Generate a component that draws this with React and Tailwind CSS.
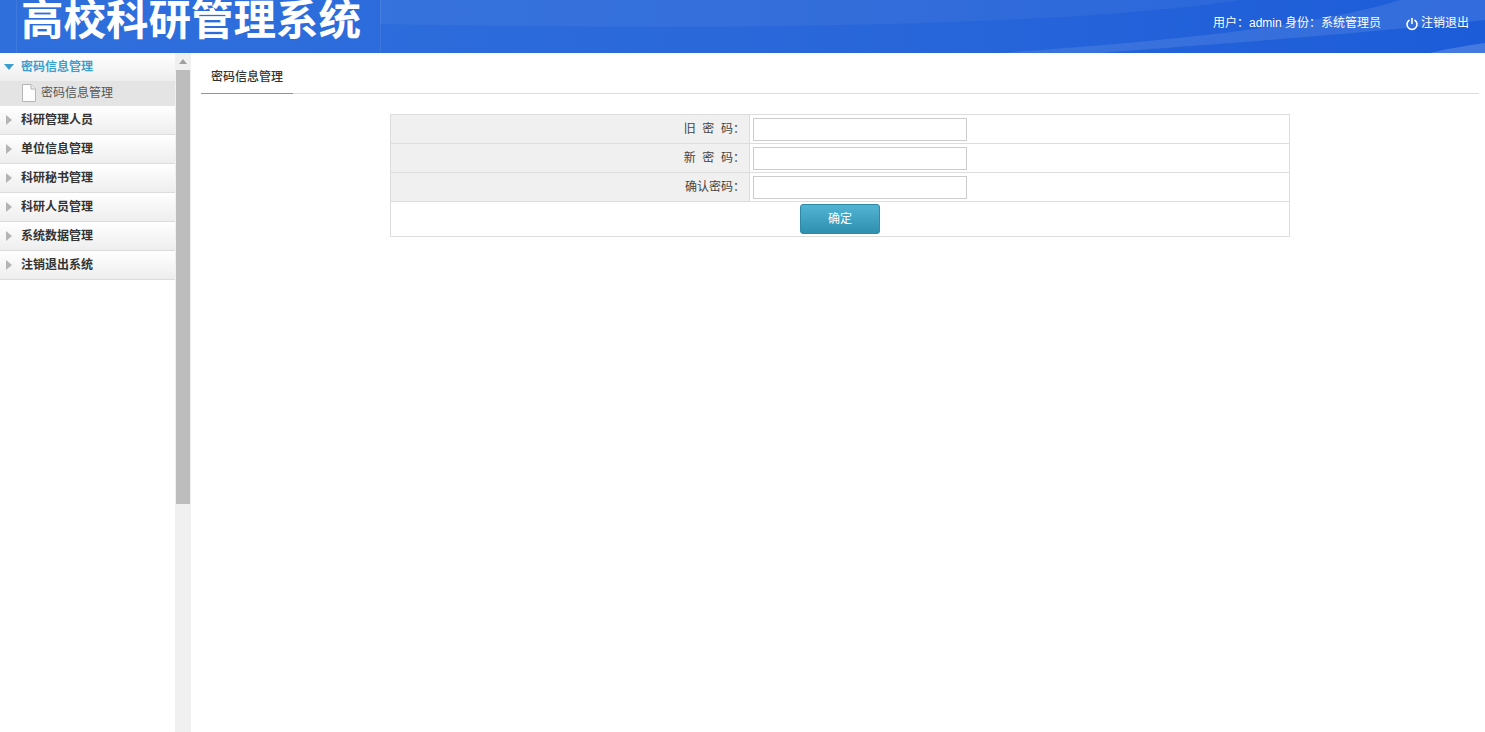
const FONT = '"Liberation Sans", "Noto Sans CJK SC", sans-serif';

function Arrow({ open }) {
  return open ? (
    <svg width="10" height="6" viewBox="0 0 10 6" className="ml-[4px] mr-[7px]">
      <path d="M0 0H10L5 6Z" fill="#3a9ecf" />
    </svg>
  ) : (
    <svg width="6" height="10" viewBox="0 0 6 10" className="ml-[6px] mr-[9px]">
      <path d="M0 0L6 5L0 10Z" fill="#b4b4b4" />
    </svg>
  );
}

function MenuHeader({ label, open }) {
  return (
    <div
      className={
        open
          ? "flex items-center h-[28px] bg-gradient-to-b from-[#ffffff] to-[#eeeeee] text-[12px] font-bold text-[#3a9ecf]"
          : "flex items-center h-[29px] border-b border-[#dcdcdc] bg-gradient-to-b from-[#ffffff] to-[#eeeeee] text-[12px] font-bold text-[#333333]"
      }
    >
      <Arrow open={open} />
      <span>{label}</span>
    </div>
  );
}

function PageIcon() {
  return (
    <svg width="14" height="18" viewBox="0 0 14 18" className="ml-[22px] mr-[5px]">
      <path d="M0.5 0.5H9L13.5 5V17.5H0.5Z" fill="#fdfdfd" stroke="#b5b5b5" />
      <path d="M9 0.5V5H13.5" fill="#eeeeee" stroke="#b5b5b5" />
    </svg>
  );
}

function FormRow({ label }) {
  return (
    <tr className="h-[29px]">
      <td className="border border-[#dddddd] bg-[#f0f0f0] text-right pr-[4px] text-[12px] text-[#444444] whitespace-pre">
        {label}
      </td>
      <td className="border border-[#dddddd] pl-[3px]">
        <input className="block w-[214px] h-[23px] border border-[#cccccc] bg-white" />
      </td>
    </tr>
  );
}

export default function App() {
  const menus = ["科研管理人员", "单位信息管理", "科研秘书管理", "科研人员管理", "系统数据管理", "注销退出系统"];
  return (
    <div className="h-[732px] w-[1485px] overflow-hidden bg-white flex flex-col" style={{ fontFamily: FONT }}>
      <header className="relative h-[53px] shrink-0 overflow-hidden bg-gradient-to-r from-[#2f6fdc] via-[#2a68da] to-[#1c5cd8] flex items-start justify-between">
        <svg className="absolute inset-0" width="1485" height="53" viewBox="0 0 1485 53">
          <path d="M1000 53C1150 42 1310 28 1400 0H1485V20C1350 35 1200 45 1100 53Z" fill="#ffffff" fillOpacity="0.1" />
          <path d="M380 0H1240C1100 22 800 32 380 24Z" fill="#ffffff" fillOpacity="0.05" />
          <path d="M1430 53C1450 48 1470 45 1485 43V53Z" fill="#ffffff" fillOpacity="0.18" />
          <path d="M16.5 0V53M380.5 0V53" stroke="#ffffff" strokeOpacity="0.08" />
        </svg>
        <h1 className="relative ml-[21px] text-[42.5px] leading-[42px] font-bold text-white whitespace-nowrap">高校科研管理系统</h1>
        <div className="relative mt-[14px] mr-[16px] flex items-center text-[12px] leading-[18px] text-white">
          <span>用户：admin 身份：系统管理员</span>
          <svg width="14" height="14" viewBox="0 0 14 14" className="ml-[24px] mr-[2px] mt-[2px]" fill="none" stroke="#ffffff" strokeWidth="1.6" strokeLinecap="round">
            <path d="M4 3.4A5 5 0 1 0 10 3.4" />
            <path d="M7 1.5V6.5" />
          </svg>
          <span>注销退出</span>
        </div>
      </header>
      <div className="flex flex-1 min-h-0">
        <aside className="w-[175px] shrink-0">
          <MenuHeader label="密码信息管理" open />
          <div className="flex items-center h-[25px] pb-[2px] bg-[#e4e4e4] text-[12px] text-[#555555]">
            <PageIcon />
            <span>密码信息管理</span>
          </div>
          {menus.map((m) => (
            <MenuHeader key={m} label={m} />
          ))}
        </aside>
        <div className="w-[16px] shrink-0 bg-[#f0f0f0] flex flex-col items-center">
          <div className="h-[17px] flex items-center justify-center">
            <svg width="8" height="5" viewBox="0 0 8 5">
              <path d="M4 0L8 5H0Z" fill="#a0a0a0" />
            </svg>
          </div>
          <div className="h-[434px] w-[14px] bg-[#bdbdbd]" />
        </div>
        <main className="flex-1 pl-[10px] pr-[6px]">
          <div className="mt-[12px] h-[29px] border-b border-[#dddddd]">
            <div className="w-[92px] h-[29px] border-b border-[#e08030] pl-[10px] text-[12px] leading-[25px] font-medium text-[#333333]">
              密码信息管理
            </div>
          </div>
          <table className="mt-[20px] ml-[189px] w-[900px] border-collapse table-fixed">
            <colgroup>
              <col className="w-[359px]" />
              <col />
            </colgroup>
            <tbody>
              <FormRow label={"旧  密  码："} />
              <FormRow label={"新  密  码："} />
              <FormRow label="确认密码：" />
              <tr className="h-[35px]">
                <td colSpan={2} className="border border-[#dddddd] text-center">
                  <button className="mx-auto block w-[80px] h-[30px] rounded-[3px] border border-[#2f8aa8] bg-gradient-to-b from-[#52b4d4] to-[#2f8fae] text-white text-[12px]">
                    确定
                  </button>
                </td>
              </tr>
            </tbody>
          </table>
        </main>
      </div>
    </div>
  );
}
